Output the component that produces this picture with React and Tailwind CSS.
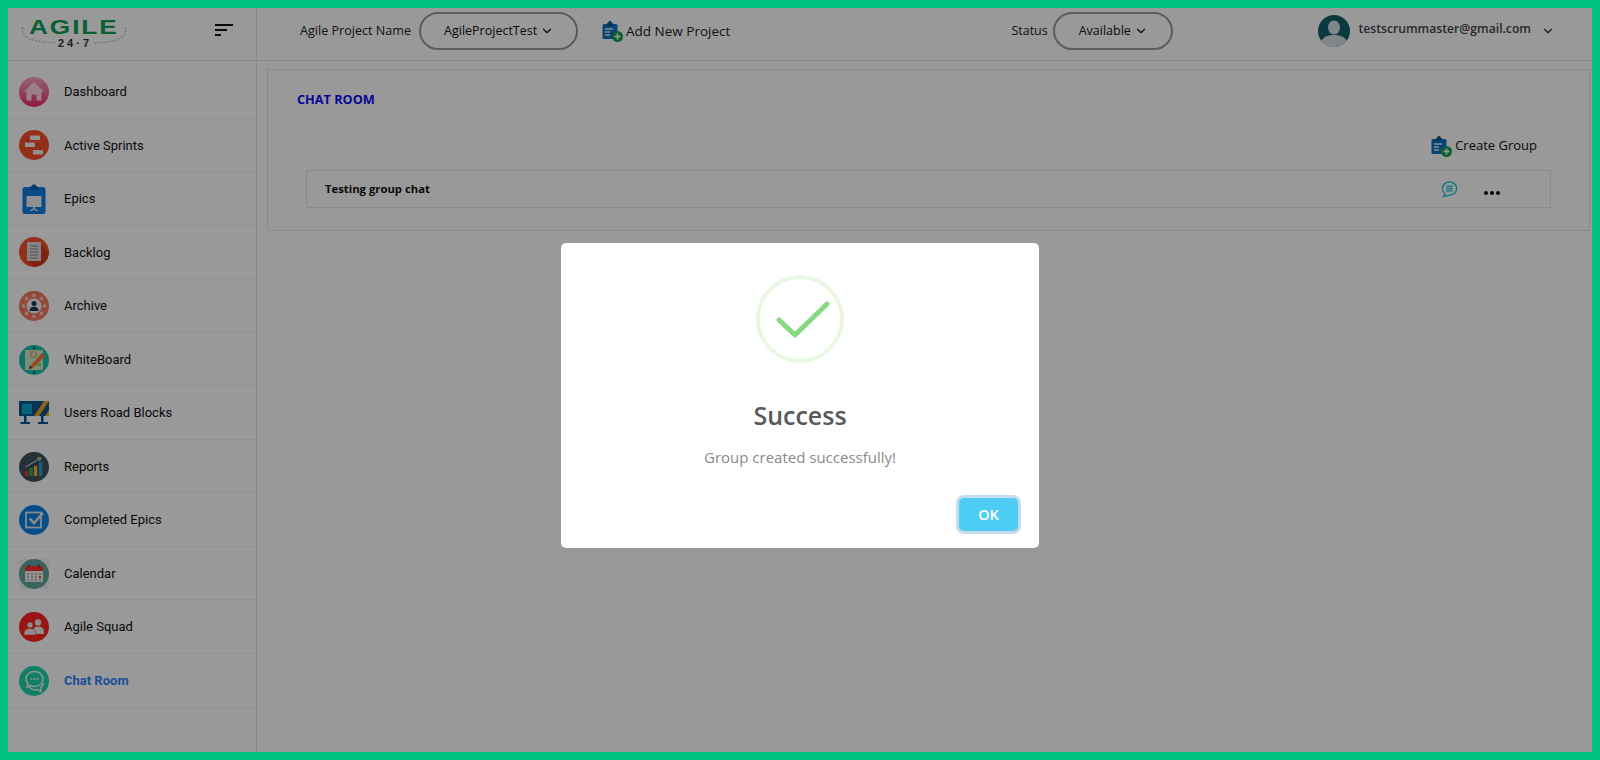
import { ChevronDown } from "lucide-react";

const sans = "font-['Open_Sans',sans-serif]";

const Circle = ({ fill, children }) => (
  <svg viewBox="0 0 30 30" className="w-[30px] h-[30px] shrink-0">
    <circle cx="15" cy="15" r="15" fill={fill} />
    {children}
  </svg>
);

const HomeIcon = () => (
  <svg viewBox="0 0 30 30" className="w-[30px] h-[30px] shrink-0">
    <defs>
      <linearGradient id="pink" x1="0" y1="0" x2="0" y2="1">
        <stop offset="0" stopColor="#f9a5c8" />
        <stop offset="1" stopColor="#ef2c66" />
      </linearGradient>
    </defs>
    <circle cx="15" cy="15" r="15" fill="url(#pink)" />
    <path d="M15 5 L25 14.5 L22.5 14.5 L22.5 23.5 L17.5 23.5 L17.5 17.5 L12.5 17.5 L12.5 23.5 L7.5 23.5 L7.5 14.5 L5 14.5 Z" fill="#ffd5e2" />
  </svg>
);

const SprintIcon = () => (
  <Circle fill="#fb4f2b">
    <path d="M9 9 V14 M21 16 V20 M10 14 H20" stroke="#7c2a18" strokeWidth="0.6" fill="none" />
    <rect x="11" y="5.5" width="10" height="4.5" rx="0.8" fill="#f4f4f4" />
    <rect x="6" y="12.5" width="10" height="4.5" rx="0.8" fill="#f4f4f4" />
    <rect x="14" y="20" width="10" height="4.5" rx="0.8" fill="#f4f4f4" />
  </Circle>
);

const EpicIcon = () => (
  <svg viewBox="0 0 30 30" className="w-[30px] h-[30px] shrink-0">
    <rect x="3.5" y="3" width="23" height="27" rx="2.5" fill="#0a7fe0" />
    <path d="M11 3.5 Q11 2 13 2 L13.5 0.5 H16.5 L17 2 Q19 2 19 3.5 V6 H11 Z" fill="#0563ad" />
    <rect x="7.5" y="12" width="15" height="11" rx="0.5" fill="#f1f1f1" />
    <path d="M15 23 V25 M11.5 27 L15 24.5 L18.5 27" stroke="#f1f1f1" strokeWidth="1.5" fill="none" />
  </svg>
);

const BacklogIcon = () => (
  <Circle fill="#f4502d">
    <path d="M22 7 L30 15 A15 15 0 0 1 15 30 L8 24 Z" fill="#d63a1d" />
    <path d="M8 5 H22 V24 H8 Z" fill="#dcdcdc" />
    <path d="M11 9 H19 M11 12 H19 M11 15 H19 M11 18 H19 M11 21 H19" stroke="#8a8a8a" strokeWidth="1" />
  </Circle>
);

const ArchiveIcon = () => (
  <Circle fill="#f57a5f">
    {[[15, 4.5], [22.4, 7.6], [25.5, 15], [22.4, 22.4], [15, 25.5], [7.6, 22.4], [4.5, 15], [7.6, 7.6]].map(([cx, cy], i) => (
      <circle key={i} cx={cx} cy={cy} r="1.8" fill="#f7cfc3" />
    ))}
    <circle cx="15" cy="15" r="7.5" fill="#f3f3f3" />
    <circle cx="15" cy="12.6" r="2.5" fill="#1f3a4d" />
    <path d="M10.5 20 Q10.5 15.8 15 15.8 Q19.5 15.8 19.5 20 Z" fill="#1f3a4d" />
  </Circle>
);

const BoardIcon = () => (
  <Circle fill="#19c2ad">
    <rect x="6" y="5" width="18" height="20" fill="#cfe8c0" />
    <rect x="12" y="7" width="5" height="5" fill="none" stroke="#f08a5d" strokeWidth="1" />
    <rect x="18" y="18" width="4" height="3" fill="#8fd060" />
    <path d="M11 21 L23 8 L26 11 L14 23 L10 24 Z" fill="#f77b37" />
    <path d="M10 24 L11 21 L13 23 Z" fill="#222" />
    <circle cx="15" cy="3" r="1.2" fill="#0d5f6a" />
    <circle cx="15" cy="27.5" r="1.2" fill="#0d5f6a" />
  </Circle>
);

const RoadBlockIcon = () => (
  <svg viewBox="0 0 30 24" className="w-[30px] h-[24px] shrink-0">
    <rect x="0" y="0" width="30" height="15" fill="#07578f" />
    <rect x="3" y="3" width="10" height="10" fill="#0aa4d0" />
    <path d="M15 15 L25 0 H30 L20 15 Z M26 15 L30 9 V15 Z" fill="#f0a21e" />
    <path d="M5 15 H7.5 V21 H5 Z M22 15 H24.5 V21 H22 Z M1.5 21 H11 V23 H1.5 Z M19 21 H29 V23 H19 Z" fill="#07578f" />
  </svg>
);

const ReportIcon = () => (
  <Circle fill="#3f535c">
    <rect x="6" y="19" width="3.2" height="5" fill="#f0304a" />
    <rect x="10.5" y="16" width="3.2" height="8" fill="#39b54a" />
    <rect x="15" y="14" width="3.2" height="10" fill="#f2b632" />
    <rect x="20" y="10" width="3.2" height="14" fill="#2e9fe0" />
    <path d="M6.5 15 L21 6.5 M18 6 L22 5.8 L20.5 9" stroke="#f1f1f1" strokeWidth="0.9" fill="none" />
  </Circle>
);

const DoneIcon = () => (
  <Circle fill="#0a83e6">
    <rect x="7" y="7.5" width="15" height="15" fill="none" stroke="#e4e4e4" strokeWidth="1.8" />
    <path d="M10.5 13.5 L15 18 L24 8" stroke="#e4e4e4" strokeWidth="2.6" fill="none" />
  </Circle>
);

const CalendarIcon = () => (
  <svg viewBox="0 0 30 30" className="w-[30px] h-[30px] shrink-0">
    <rect width="30" height="30" fill="#f3f3f3" />
    <circle cx="15" cy="15" r="15" fill="#5ea79c" />
    <rect x="6" y="8" width="18" height="15" rx="1" fill="#f2f2f2" />
    <path d="M6 9 Q6 7 8 7 H22 Q24 7 24 9 V12 H6 Z" fill="#ff2d2d" />
    <path d="M10 5.5 V8.5 M20 5.5 V8.5" stroke="#444" strokeWidth="1.2" />
    {[14, 17, 20].map((y) =>
      [8, 12, 16, 20].map((x) => (
        <rect key={`${x}-${y}`} x={x} y={y} width="2" height="2" fill={x === 20 && y === 17 ? "#ff2d2d" : "#bdbdbd"} />
      ))
    )}
  </svg>
);

const SquadIcon = () => (
  <Circle fill="#ff2320">
    <circle cx="19" cy="10.5" r="3.2" fill="#ececec" />
    <path d="M14 20 Q14 14.5 19 14.5 Q25 14.5 25 20 V22 H14 Z" fill="#ececec" />
    <circle cx="11" cy="13" r="3" fill="#ececec" stroke="#ff2320" strokeWidth="0.6" />
    <path d="M5 23 V21.5 Q5 16.5 11 16.5 Q17 16.5 17 21.5 V23 Z" fill="#ececec" stroke="#ff2320" strokeWidth="0.6" />
  </Circle>
);

const ChatIcon = () => (
  <Circle fill="#1cd4a8">
    <path d="M15.5 5.5 C10.5 5.5 7 9 7 13 C7 15 8 16.5 9 17.5 L8 21 L12 19.5 C13 20 14.5 20.5 15.5 20.5 C20.5 20.5 24 17 24 13 C24 9 20.5 5.5 15.5 5.5 Z" fill="none" stroke="#eef7f3" strokeWidth="1.6" />
    <path d="M10 19 C10 23 15 24.5 18 23.5 L22 25.5 L21.5 22 C23.5 20.5 24.5 19 24.5 17" fill="none" stroke="#eef7f3" strokeWidth="1.6" />
    <circle cx="12.5" cy="13" r="1" fill="#eef7f3" />
    <circle cx="15.5" cy="13" r="1" fill="#eef7f3" />
    <circle cx="18.5" cy="13" r="1" fill="#eef7f3" />
  </Circle>
);

const AddClipboard = () => (
  <svg viewBox="0 0 21 21" className="w-[21px] h-[21px] shrink-0">
    <rect x="0.5" y="3" width="15" height="15" rx="1.5" fill="#0a74c9" />
    <path d="M5 3 Q5 1.5 6.5 1.5 L7 0 H9 L9.5 1.5 Q11 1.5 11 3 V5 H5 Z" fill="#07578f" />
    <path d="M3 8 H11 M3 11 H8 M3 14 H8" stroke="#e8e8e8" strokeWidth="1.3" />
    <circle cx="15.5" cy="15.5" r="5.5" fill="#12a150" />
    <path d="M15.5 12.5 V18.5 M12.5 15.5 H18.5" stroke="#ffffff" strokeWidth="1.6" />
  </svg>
);

const Avatar = () => (
  <svg viewBox="0 0 32 32" className="w-[32px] h-[32px] shrink-0">
    <circle cx="16" cy="16" r="16" fill="#12616c" />
    <ellipse cx="16" cy="12.5" rx="6" ry="7" fill="#d5dfe6" />
    <path d="M3.5 26 C5 21.5 11 20 16 20 C21 20 27 21.5 28.5 26 C25.5 29.8 21 32 16 32 C11 32 6.5 29.8 3.5 26 Z" fill="#d5dfe6" />
  </svg>
);

const navItems = [
  { label: "Dashboard", icon: HomeIcon },
  { label: "Active Sprints", icon: SprintIcon },
  { label: "Epics", icon: EpicIcon },
  { label: "Backlog", icon: BacklogIcon },
  { label: "Archive", icon: ArchiveIcon },
  { label: "WhiteBoard", icon: BoardIcon },
  { label: "Users Road Blocks", icon: RoadBlockIcon },
  { label: "Reports", icon: ReportIcon },
  { label: "Completed Epics", icon: DoneIcon },
  { label: "Calendar", icon: CalendarIcon },
  { label: "Agile Squad", icon: SquadIcon },
  { label: "Chat Room", icon: ChatIcon, active: true },
];

const Logo = () => (
  <div className="relative w-[104px] h-[32px]">
    <svg viewBox="0 0 104 32" className="absolute inset-0 w-[104px] h-[32px]">
      <path d="M1 10 Q-1 14 2 18 Q8 25 34 26 M72 26 Q98 25 102 18 Q105 14 103 10" fill="none" stroke="#8a8a8a" strokeWidth="0.8" strokeDasharray="2 1.5" />
    </svg>
    <div className="absolute left-[7px] top-[-3px] origin-left scale-x-[1.25] font-['Liberation_Sans',sans-serif] text-[21px] leading-[26px] font-bold tracking-[1.5px] text-[#0fa155]">
      AGILE
    </div>
    <div className="absolute left-[36px] top-[20px] font-['Liberation_Sans',sans-serif] text-[11px] leading-[12px] font-bold tracking-[3px] text-[#333]">
      24·7
    </div>
  </div>
);

const Pill = ({ label, className }) => (
  <div className={`h-[38px] border-2 border-[#999] rounded-[19px] flex items-center text-[12.5px] text-[#111] ${className}`}>
    <span>{label}</span>
    <ChevronDown size={14} strokeWidth={2} className="ml-[3px]" />
  </div>
);

export default function App() {
  return (
    <div className={`relative h-screen border-8 border-[#00c07f] bg-white overflow-hidden ${sans}`}>
      {/* header */}
      <header className="flex h-[53px] border-b border-[#e4e4e4]">
        <div className="w-[249px] shrink-0 border-r border-[#e4e4e4] flex items-start pl-[14px] pr-[23px] pt-[9px] justify-between">
          <Logo />
          <div className="flex flex-col gap-[3px] pt-[7px]">
            <div className="w-[18px] h-[2px] bg-[#111]" />
            <div className="w-[12px] h-[2px] bg-[#111]" />
            <div className="w-[6px] h-[2px] bg-[#111]" />
          </div>
        </div>
        <div className="flex-1 flex items-center pb-[6px] pl-[43px] pr-[37px] text-[#222]">
          <span className="text-[12.6px] mr-[8px]">Agile Project Name</span>
          <Pill label="AgileProjectTest" className="w-[159px] pl-[23px]" />
          <div className="flex items-center ml-[24px] text-[13.5px]">
            <AddClipboard />
            <span className="ml-[3px]">Add New Project</span>
          </div>
          <span className="text-[12.5px] ml-[281px] mr-[5px]">Status</span>
          <Pill label="Available" className="w-[120px] pl-[24px]" />
          <div className="ml-auto flex items-center">
            <Avatar />
            <span className="ml-[8px] text-[12.2px] font-semibold text-[#444] pb-[3px]">testscrummaster@gmail.com</span>
            <ChevronDown size={14} strokeWidth={2} className="ml-[10px] text-[#333]" />
          </div>
        </div>
      </header>

      <div className="flex h-[calc(100%-53px)]">
        {/* sidebar */}
        <aside className="w-[249px] shrink-0 border-r border-[#e4e4e4] pt-[5px]">
          {navItems.map((item) => {
            const Icon = item.icon;
            return (
              <div key={item.label} className="h-[52.55px] mb-[1px] flex items-center border-b border-[#f0f0f0] pl-[11px]">
                <div className="w-[30px] flex justify-center">
                  <Icon />
                </div>
                <span className={`ml-[15px] font-['Roboto',sans-serif] text-[13px] ${item.active ? "font-bold text-[#2b84ff]" : "text-[#111]"}`}>
                  {item.label}
                </span>
              </div>
            );
          })}
        </aside>

        {/* main */}
        <main className="flex-1 pl-[10px] pr-[2px] pt-[8px]">
          <div className="h-[162px] border border-[#e4e4e4] pl-[29px] pr-[38px] pt-[20px]">
            <h1 className="text-[12.7px] leading-[18px] font-bold text-[#0b0bfa]">CHAT ROOM</h1>
            <div className="flex justify-end items-center mt-[27px] pr-[14px] h-[22px] text-[13px] text-[#111]">
              <AddClipboard />
              <span className="ml-[3px]">Create Group</span>
            </div>
            <div className="mt-[13px] ml-[9px] h-[38px] border border-[#e4e4e4] flex items-center pl-[18px]">
              <span className="text-[11.3px] font-bold text-[#111] pt-[1px]">Testing group chat</span>
              <svg viewBox="0 0 18 18" className="ml-auto w-[17px] h-[18px] text-[#14c4dc]" fill="none" stroke="currentColor" strokeWidth="1.4">
                <path d="M9 1.5 C13.2 1.5 16.5 4.6 16.5 8.6 C16.5 12.6 13.2 15.5 9 15.5 C7.5 15.5 5.5 16.8 3 16.8 C4.2 15.8 4.3 14.6 3.7 13.6 C2.3 12.4 1.5 10.6 1.5 8.6 C1.5 4.6 4.8 1.5 9 1.5 Z" />
                <path d="M5.5 6 H12.5 M5.5 8.5 H12.5 M5.5 11 H12.5" />
              </svg>
              <div className="flex gap-[2px] ml-[26px] mr-[50px] mt-[7px]">
                <span className="w-[4px] h-[4px] rounded-full bg-[#111]" />
                <span className="w-[4px] h-[4px] rounded-full bg-[#111]" />
                <span className="w-[4px] h-[4px] rounded-full bg-[#111]" />
              </div>
            </div>
          </div>
        </main>
      </div>

      {/* success alert */}
      <div className="absolute inset-0 bg-black/40 flex justify-center items-start pt-[235px]">
        <div className="w-[478px] h-[305px] bg-white rounded-[5px] flex flex-col items-center pt-[32px] pr-[20px] pl-[20px]">
          <svg viewBox="0 0 88 88" className="w-[88px] h-[88px]">
            <circle cx="44" cy="44" r="42" fill="none" stroke="#e9f7e3" strokeWidth="4" />
            <path d="M23 45 L39 60 L71 29" fill="none" stroke="#86d97f" strokeWidth="5" strokeLinecap="round" strokeLinejoin="round" />
          </svg>
          <h2 className="mt-[34px] text-[25px] leading-[36px] font-semibold text-[#595959]">Success</h2>
          <p className="mt-[12px] text-[15px] leading-[24px] text-[#8a8a8a]">Group created successfully!</p>
          <button className="self-end mt-[29px] mr-[1px] w-[59px] h-[33px] rounded-[5px] bg-[#4dcdf4] text-white text-[14.5px] font-semibold ring-[3px] ring-[#c4dcec]">
            OK
          </button>
        </div>
      </div>
    </div>
  );
}
